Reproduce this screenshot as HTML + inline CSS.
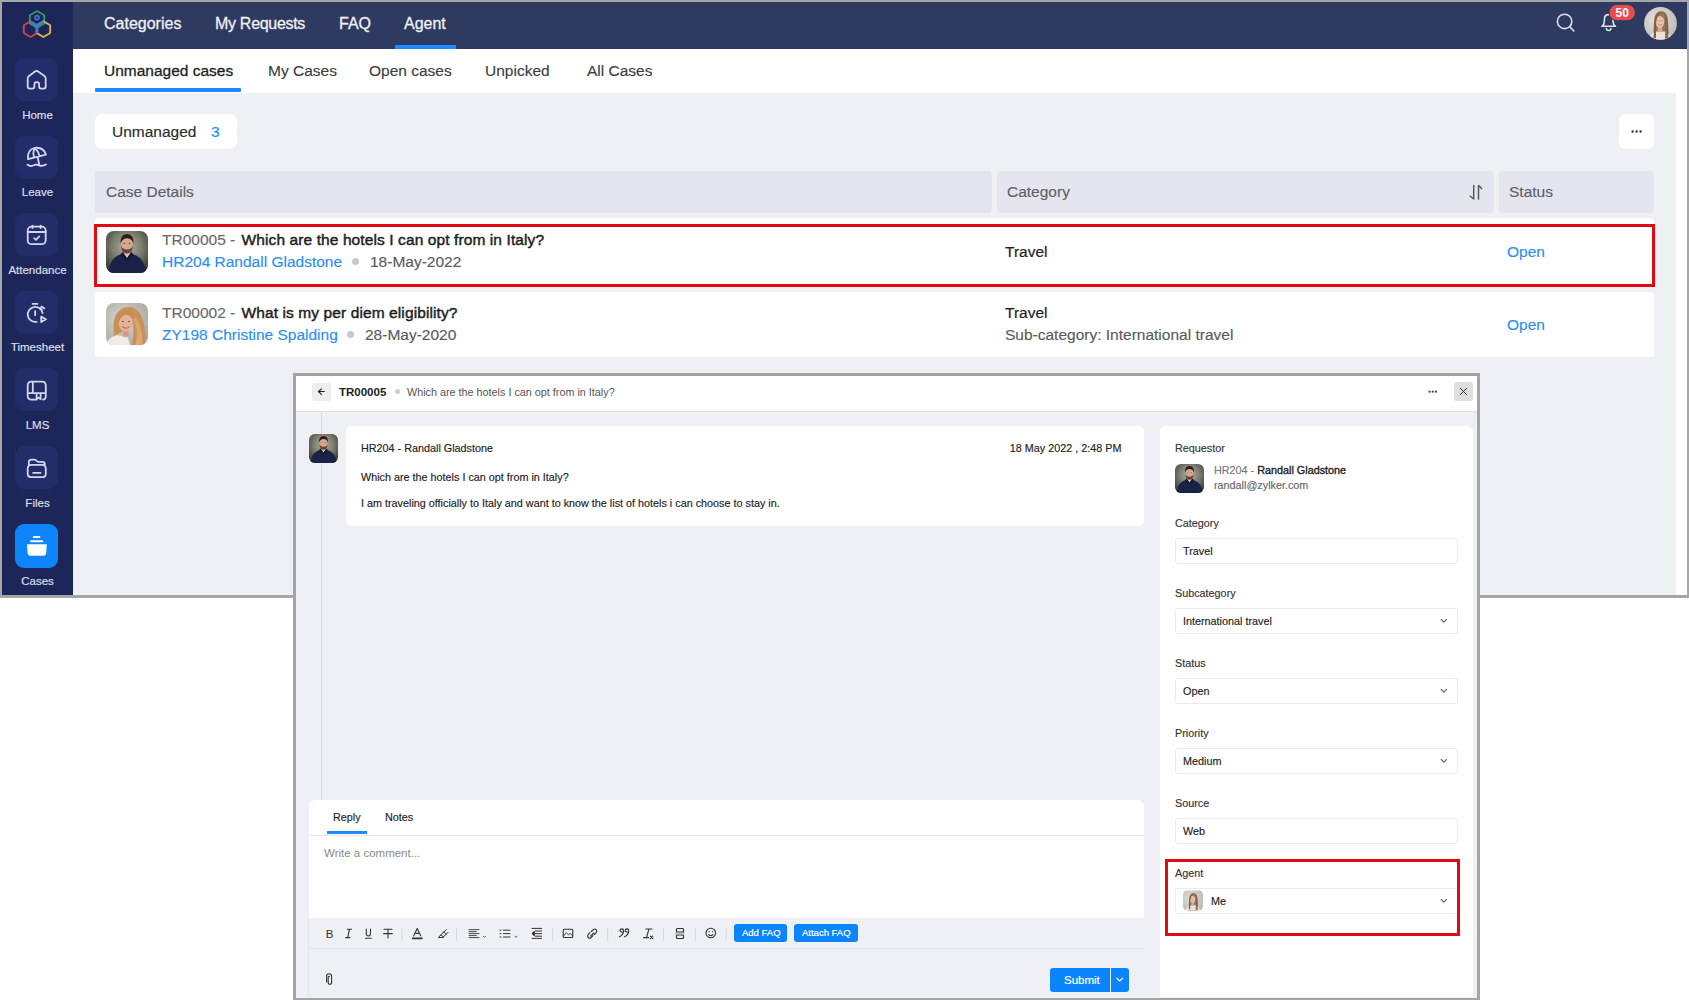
<!DOCTYPE html>
<html><head><meta charset="utf-8">
<style>
*{box-sizing:border-box;margin:0;padding:0}
html,body{width:1689px;height:1000px;overflow:hidden;background:#fff;font-family:"Liberation Sans",sans-serif}
.a{position:absolute}
.t{position:absolute;white-space:nowrap;line-height:1}
svg.ov{position:absolute;left:0;top:0;width:1689px;height:1000px;overflow:visible}
.sb{position:absolute;left:15px;width:43px;height:43px;border-radius:9px;background:#232d69}
.sl{position:absolute;left:2px;width:71px;text-align:center;color:#dcdfea;font-size:11.5px;line-height:1;-webkit-text-stroke:0.2px #dcdfea}
.nav{color:#eef0f6;font-size:16px;-webkit-text-stroke:0.3px #eef0f6}
.sub{color:#2a2a2a;font-size:15.5px;-webkit-text-stroke:0.15px currentColor}
.hd{font-size:15.5px;color:#5f6066;-webkit-text-stroke:0.15px #5f6066}
.fl{font-size:10.8px;color:#333;-webkit-text-stroke:0.15px currentColor}
.fb{position:absolute;left:1175px;width:283px;height:26px;border:1px solid #eaebee;border-radius:3px;background:#fff}
.fv{font-size:10.8px;color:#222;-webkit-text-stroke:0.15px currentColor}

</style></head><body>
<svg width="0" height="0" style="position:absolute">
<defs>
<radialGradient id="gMbg" cx="50%" cy="38%" r="70%"><stop offset="0" stop-color="#b0b1a0"/><stop offset="0.5" stop-color="#7c7d70"/><stop offset="1" stop-color="#333431"/></radialGradient>
<radialGradient id="gWbg" cx="40%" cy="40%" r="70%"><stop offset="0" stop-color="#e4e4e2"/><stop offset="1" stop-color="#b9b7b4"/></radialGradient>
<radialGradient id="gW2bg" cx="40%" cy="40%" r="70%"><stop offset="0" stop-color="#dcdad6"/><stop offset="1" stop-color="#a9a6a2"/></radialGradient>
<symbol id="man" viewBox="0 0 100 100">
<rect width="100" height="100" fill="url(#gMbg)"/>
<path d="M6 100 Q8 64 34 56 L50 60 L66 56 Q92 64 96 100 Z" fill="#1a2347"/>
<path d="M42 50 L50 70 L58 50 Z" fill="#d8c8c0"/>
<path d="M34 56 L50 72 L66 56 L60 50 L50 64 L40 50 Z" fill="#121a33"/>
<ellipse cx="50" cy="31" rx="14" ry="18" fill="#d6a690"/>
<path d="M36 36 Q37 54 50 54 Q63 54 64 36 Q60 44 50 44 Q40 44 36 36 Z" fill="#6a4536"/>
<path d="M35 30 Q33 8 50 7 Q67 8 65 30 Q63 18 50 17 Q38 18 35 30 Z" fill="#2b1e18"/>
<ellipse cx="44" cy="30" rx="2" ry="1.2" fill="#5a3a30"/>
<ellipse cx="56" cy="30" rx="2" ry="1.2" fill="#5a3a30"/>
</symbol>
<symbol id="wme" viewBox="0 0 100 100">
<rect width="100" height="100" fill="url(#gWbg)"/>
<path d="M28 100 L30 46 Q31 12 52 12 Q73 13 73 46 L76 100 Z" fill="#9a7658"/>
<path d="M12 100 Q18 80 36 74 L62 74 Q80 80 86 100 Z" fill="#ebe3d6"/>
<rect x="42" y="58" width="13" height="18" fill="#d9a88e"/>
<ellipse cx="48" cy="45" rx="13.5" ry="17.5" fill="#e9c3aa"/>
<path d="M32 46 Q32 18 52 16 Q40 24 37 44 L36 94 L29 94 Z" fill="#7e5d43"/>
<path d="M66 44 Q66 22 54 16 Q70 18 72 44 L74 96 L64 96 Q66 70 62 50 Z" fill="#866446"/>
<path d="M38 42 L58 42" stroke="#7a6050" stroke-width="1.2" opacity="0.8"/>
<path d="M42 53 Q48 57 54 53" stroke="#a05e4e" stroke-width="1.6" fill="none"/>
</symbol>
<symbol id="wch" viewBox="0 0 100 100">
<rect width="100" height="100" fill="url(#gW2bg)"/>
<path d="M20 80 Q10 30 40 12 Q70 2 84 30 Q96 56 94 100 L62 100 Q68 72 64 52 Z" fill="#c9915a"/>
<path d="M0 100 Q4 82 26 76 L52 82 L58 100 Z" fill="#eeeae6"/>
<rect x="40" y="62" width="14" height="18" fill="#d49c84"/>
<ellipse cx="47" cy="47" rx="17" ry="21" fill="#e6b39a"/>
<path d="M28 46 Q30 16 56 18 Q70 24 68 46 Q62 28 46 28 Q34 32 30 48 Z" fill="#c68b55"/>
<path d="M64 38 Q80 60 70 100 L86 100 Q90 62 72 36 Z" fill="#dca769"/>
<ellipse cx="40" cy="44" rx="2.5" ry="1.5" fill="#7a5444"/>
<ellipse cx="55" cy="44" rx="2.5" ry="1.5" fill="#7a5444"/>
<path d="M38 56 Q47 64 56 56" stroke="#a05a4a" stroke-width="2.2" fill="none"/>
</symbol>
</defs>
</svg>

<!-- frame -->
<div class="a" style="left:0;top:0;width:1689px;height:598px;background:#a5a6a8"></div>
<div class="a" style="left:2px;top:2px;width:71px;height:593px;background:#1c2659"></div>
<div class="a" style="left:73px;top:2px;width:1614px;height:47px;background:#2e3a5f"></div>
<div class="a" style="left:73px;top:49px;width:1614px;height:44px;background:#fff"></div>
<div class="a" style="left:1676px;top:93px;width:11px;height:502px;background:#fff"></div>
<div class="a" style="left:73px;top:93px;width:1603px;height:502px;background:#eef0f4"></div>

<!-- sidebar boxes -->
<div class="sb" style="top:58px"></div>
<div class="sl" style="top:110px">Home</div>
<div class="sb" style="top:135.5px"></div>
<div class="sl" style="top:187px">Leave</div>
<div class="sb" style="top:213px"></div>
<div class="sl" style="top:265px">Attendance</div>
<div class="sb" style="top:290.5px"></div>
<div class="sl" style="top:342px">Timesheet</div>
<div class="sb" style="top:368px"></div>
<div class="sl" style="top:420px">LMS</div>
<div class="sb" style="top:445.5px"></div>
<div class="sl" style="top:498px">Files</div>
<div class="sb" style="top:524px;background:#0f85fb;height:44px"></div>
<div class="sl" style="top:576px">Cases</div>

<svg class="ov" viewBox="0 0 1689 1000">
<!-- logo -->
<g fill="none" stroke-width="1.8" stroke-linejoin="round">
<path d="M37 11 L44.2 15.2 L44.2 23.4 L37 27.6 L29.8 23.4 L29.8 15.2 Z" stroke="#2f9a62"/>
<path d="M30.6 21.2 L37.4 25.2 L37.4 33 L30.6 37 L23.8 33 L23.8 25.2 Z" stroke="#d8424f"/>
<path d="M43.4 21.2 L50.2 25.2 L50.2 33 L43.4 37 L36.6 33 L36.6 25.2 Z" stroke="#e8b44c"/>
<circle cx="37" cy="17.6" r="2" stroke="#3d7cd6" stroke-width="1.6"/>
<path d="M31 22.2 L37 25.6 L43 22.2 M37 25.6 L37 32.6" stroke="#3d7cd6" stroke-width="2.4" stroke-linecap="round"/>
</g>
<!-- sidebar icons -->
<g fill="none" stroke="#d3d6ee" stroke-width="1.8" stroke-linecap="round" stroke-linejoin="round">
<g transform="translate(22,64)"><path d="M5.7 14.5 Q5.7 13 7 12 L13 7.6 Q14.6 6.4 16.2 7.6 L22.4 12 Q23.7 13 23.7 14.5 L23.7 22.6 Q23.7 24.6 21.7 24.6 L19.1 24.6 Q17.1 24.6 17.1 22.6 L17.1 20.4 A2.35 2.35 0 0 0 12.4 20.4 L12.4 22.6 Q12.4 24.6 10.4 24.6 L7.7 24.6 Q5.7 24.6 5.7 22.6 Z"/></g>
<g transform="translate(22,141)"><path d="M6 18.2 Q5 9 12.4 7 Q21 5.5 24 13.6 Z M12.4 7 Q10.5 12 12 16.9 M12.4 7 Q16.5 10 17.5 15.2 M15.8 16.3 L17.2 24"/><path d="M5.5 23.6 Q8 25.8 11 24.5 Q14 23 17 24.3 Q20.5 25.6 24 23.5"/></g>
<g transform="translate(22,220)"><rect x="5.7" y="6.7" width="18" height="17.5" rx="4"/><path d="M5.7 12 L23.7 12 M10.5 5.6 L10.5 8 M18.6 5.6 L18.6 8 M12.2 18.2 L14 19.8 L17.3 16.4"/></g>
<g transform="translate(22,297)"><path d="M10.6 6.9 L15.4 6.9 M20.6 16.1 A7.5 7.5 0 1 0 14.6 24.8 M13.2 14.1 L13.2 18.2 M19.6 9.4 L22.4 11.4 M18.2 10.8 L19.8 12.6"/><path d="M19.2 19.6 L24 22.3 L19.2 25 Z"/></g>
<g transform="translate(22,375)"><path d="M14.6 24.6 L9.5 24.6 Q5.7 24.6 5.7 20.8 L5.7 10.4 Q5.7 6.6 9.5 6.6 L20 6.6 Q23.8 6.6 23.8 10.4 L23.8 20.8 Q23.8 24.6 21 24.6 M10.8 6.6 L10.8 18.1 M5.7 18.1 L23.8 18.1 M14.6 18.2 L14.6 24.2 L16.6 22.6 L18.6 24.2 L18.6 18.2"/></g>
<g transform="translate(22,452)"><path d="M6.8 12.6 L6.8 10.4 Q6.8 7.6 9.6 7.6 L12.2 7.6 Q13.6 7.6 14.8 9 Q15.6 9.9 17 9.9 L20.4 9.9 Q22.8 9.9 22.8 12.4 M5.7 16.6 Q5.7 12.8 9.5 12.8 L20 12.8 Q23.8 12.8 23.8 16.6 L23.8 21.4 Q23.8 25.2 20 25.2 L9.5 25.2 Q5.7 25.2 5.7 21.4 Z M11.2 20.9 L18.5 20.9"/></g>
</g>
<!-- cases icon -->
<g fill="#fff">
<rect x="32.8" y="536" width="7.6" height="2" rx="1"/>
<rect x="30" y="540.3" width="13.2" height="2" rx="1"/>
<path d="M27 544.2 L46.8 544.2 L46.2 553 Q46 555.8 43.2 555.8 L30.6 555.8 Q27.8 555.8 27.6 553 Z"/>
</g>
<!-- search, bell -->
<g fill="none" stroke="#dfe2ee" stroke-width="1.6" stroke-linecap="round">
<circle cx="1564.6" cy="21.4" r="7.2"/>
<path d="M1569.8 26.8 L1573.8 31"/>
<path d="M1601.9 26.3 Q1604.3 24.6 1604.4 21.2 L1604.4 19 Q1604.4 14.6 1608.7 14.6 Q1613 14.6 1613 19 L1613 21.2 Q1613.1 24.6 1615.5 26.3 Z" stroke-linejoin="round"/>
<path d="M1606.3 28.6 A2.4 2.4 0 0 0 1611 28.6"/>
</g>
<rect x="1609" y="4.4" width="26.4" height="16.4" rx="8.2" fill="#e84c4f" stroke="#2e3a5f" stroke-width="1"/>
<text x="1622.2" y="17.4" font-family="Liberation Sans" font-size="12" font-weight="bold" fill="#fff" text-anchor="middle">50</text>
<!-- avatar top -->
<clipPath id="cTop"><circle cx="1660.5" cy="23.4" r="16.4"/></clipPath>
<g clip-path="url(#cTop)"><use href="#wme" x="1644" y="7" width="33" height="33"/></g>
</svg>

<!-- top nav -->
<div class="t nav" style="left:104px;top:16px">Categories</div>
<div class="t nav" style="left:215px;top:16px;letter-spacing:-0.3px">My Requests</div>
<div class="t nav" style="left:339px;top:16px">FAQ</div>
<div class="t nav" style="left:404px;top:16px">Agent</div>
<div class="a" style="left:395px;top:45px;width:61px;height:4px;background:#1a8cff"></div>

<!-- sub tabs -->
<div class="t sub" style="left:104px;top:62.5px;color:#1f1f1f;-webkit-text-stroke:0.3px #1f1f1f">Unmanaged cases</div>
<div class="t sub" style="left:268px;top:62.5px;color:#3d3d3d">My Cases</div>
<div class="t sub" style="left:369px;top:62.5px;color:#3d3d3d">Open cases</div>
<div class="t sub" style="left:485px;top:62.5px;color:#3d3d3d">Unpicked</div>
<div class="t sub" style="left:587px;top:62.5px;color:#3d3d3d">All Cases</div>
<div class="a" style="left:95px;top:88px;width:146px;height:4px;background:#1a8cff;border-radius:1px"></div>

<!-- unmanaged card -->
<div class="a" style="left:95px;top:114px;width:142px;height:35px;background:#fff;border-radius:8px"></div>
<div class="t sub" style="left:112px;top:124px">Unmanaged</div>
<div class="t sub" style="left:211px;top:124px;color:#1a8cff">3</div>
<div class="a" style="left:1619px;top:114px;width:35px;height:35px;background:#fff;border-radius:6px"></div>
<svg class="ov" viewBox="0 0 1689 1000"><g fill="#333"><circle cx="1632.6" cy="131.5" r="1.2"/><circle cx="1636.6" cy="131.5" r="1.2"/><circle cx="1640.6" cy="131.5" r="1.2"/></g></svg>

<!-- table header -->
<div class="a" style="left:95px;top:170.5px;width:897px;height:42px;background:#e4e5ee;border-radius:4px"></div>
<div class="a" style="left:997px;top:170.5px;width:497px;height:42px;background:#e4e5ee;border-radius:4px"></div>
<div class="a" style="left:1499px;top:170.5px;width:155px;height:42px;background:#e4e5ee;border-radius:4px"></div>
<div class="t hd" style="left:106px;top:184px">Case Details</div>
<div class="t hd" style="left:1007px;top:184px">Category</div>
<div class="t hd" style="left:1509px;top:184px">Status</div>

<!-- rows -->
<div class="a" style="left:95px;top:218px;width:1559px;height:68px;background:#fff;border-radius:4px"></div>
<div class="a" style="left:95px;top:292px;width:1559px;height:65px;background:#fff;border-radius:4px"></div>
<svg class="ov" viewBox="0 0 1689 1000">
<!-- sort -->
<g fill="none" stroke="#555" stroke-width="1.45" stroke-linecap="round" stroke-linejoin="round">
<path d="M1473.7 185.4 L1473.7 199 L1470.3 196.3"/>
<path d="M1478.5 199 L1478.5 185.4 L1481.6 188.6"/>
</g>
<clipPath id="cR1"><rect x="106" y="231" width="42" height="42" rx="8"/></clipPath>
<g clip-path="url(#cR1)"><use href="#man" x="106" y="231" width="42" height="42"/></g>
<clipPath id="cR2"><rect x="106" y="303" width="42" height="42" rx="8"/></clipPath>
<g clip-path="url(#cR2)"><use href="#wch" x="106" y="303" width="42" height="42"/></g>
</svg>
<div class="a" style="left:94px;top:223.5px;width:1560.5px;height:63px;border:3px solid #e10a14"></div>

<div class="t sub" style="left:162px;top:231.5px;color:#6a6a6a">TR00005 - <span style="color:#1e1e1e;-webkit-text-stroke:0.45px #1e1e1e;letter-spacing:0.1px;margin-left:2px">Which are the hotels I can opt from in Italy?</span></div>
<div class="t sub" style="left:162px;top:254px;color:#2b8ef0">HR204 Randall Gladstone</div>
<div class="a" style="left:352px;top:258px;width:7px;height:7px;border-radius:50%;background:#c8c8c8"></div>
<div class="t sub" style="left:370px;top:254px;color:#5a5a5a">18-May-2022</div>
<div class="t sub" style="left:1005px;top:244px;color:#1e1e1e;-webkit-text-stroke:0.2px #1e1e1e">Travel</div>
<div class="t sub" style="left:1507px;top:244px;color:#2b8ef0">Open</div>

<div class="t sub" style="left:162px;top:305px;color:#6a6a6a">TR00002 - <span style="color:#1e1e1e;-webkit-text-stroke:0.45px #1e1e1e;letter-spacing:0.1px;margin-left:2px">What is my per diem eligibility?</span></div>
<div class="t sub" style="left:162px;top:327px;color:#2b8ef0">ZY198 Christine Spalding</div>
<div class="a" style="left:347px;top:331px;width:7px;height:7px;border-radius:50%;background:#c8c8c8"></div>
<div class="t sub" style="left:365px;top:327px;color:#5a5a5a">28-May-2020</div>
<div class="t sub" style="left:1005px;top:305px;color:#1e1e1e;-webkit-text-stroke:0.2px #1e1e1e">Travel</div>
<div class="t sub" style="left:1005px;top:327px;color:#5a5a5a">Sub-category: International travel</div>
<div class="t sub" style="left:1507px;top:317px;color:#2b8ef0">Open</div>

<!-- MODAL -->
<div class="a" style="left:293px;top:373px;width:1186.5px;height:627px;background:#a3a4a6"></div>
<div class="a" style="left:296px;top:376px;width:1180.5px;height:621.5px;background:#eef0f4"></div>
<div class="a" style="left:296px;top:376px;width:1180.5px;height:36px;background:#fff;border-bottom:1px solid #dfe1e6"></div>
<div class="a" style="left:312px;top:383px;width:19px;height:18px;background:#eeeeee;border-radius:3px"></div>
<div class="t" style="left:339px;top:386.5px;font-size:11.5px;color:#222;font-weight:bold">TR00005</div>
<div class="a" style="left:395px;top:389px;width:5px;height:5px;border-radius:50%;background:#cfcfcf"></div>
<div class="t" style="left:407px;top:386.5px;font-size:10.8px;color:#555">Which are the hotels I can opt from in Italy?</div>
<div class="a" style="left:1454px;top:382px;width:19px;height:19px;background:#dedede;border-radius:3px"></div>

<!-- timeline -->
<div class="a" style="left:321px;top:412px;width:1px;height:388px;background:#d9dce2"></div>

<!-- message card -->
<div class="a" style="left:346px;top:426px;width:798px;height:100px;background:#fff;border-radius:6px"></div>
<div class="t fv" style="left:361px;top:443px">HR204 - Randall Gladstone</div>
<div class="t fv" style="right:567.5px;top:443px">18 May 2022 , 2:48 PM</div>
<div class="t fv" style="left:361px;top:472px">Which are the hotels I can opt from in Italy?</div>
<div class="t fv" style="left:361px;top:498px">I am traveling officially to Italy and want to know the list of hotels i can choose to stay in.</div>

<!-- reply panel -->
<div class="a" style="left:309px;top:800px;width:835px;height:148px;background:#fff;border-radius:6px 6px 0 0"></div>
<div class="a" style="left:309px;top:835px;width:835px;height:1px;background:#e3e5ea"></div>
<div class="t fv" style="left:333px;top:812px">Reply</div>
<div class="t fv" style="left:385px;top:812px">Notes</div>
<div class="a" style="left:327px;top:831px;width:40px;height:3px;background:#1a8cff"></div>
<div class="t" style="left:324px;top:848px;font-size:11.5px;color:#8a8a8a">Write a comment...</div>
<div class="a" style="left:309px;top:918px;width:835px;height:31px;background:#eff0f4;border-bottom:1px solid #dfe1e6"></div>
<div class="a" style="left:308px;top:918px;width:1px;height:79px;background:#e2e4e8"></div>
<svg class="ov" viewBox="0 0 1689 1000">
<g fill="#2f2f2f" font-family="Liberation Serif" font-size="11.5">
<text x="325.8" y="938" font-family="Liberation Sans">B</text>
</g>
<g fill="none" stroke="#333" stroke-width="1.1" stroke-linecap="round" stroke-linejoin="round">
<!-- U -->
<path d="M366.3 929 L366.3 933.5 Q366.3 936 368.4 936 Q370.5 936 370.5 933.5 L370.5 929 M365.5 938.3 L371.3 938.3"/>
<!-- T strike -->
<path d="M384 929.3 L392 929.3 M388 929.3 L388 938 M383.6 933.6 L392.4 933.6"/>
<!-- A -->
<path d="M413.6 936 L417.2 928.6 L420.8 936 M414.8 933.4 L419.6 933.4"/>
<path d="M412.6 938.4 L421.9 938.4" stroke-width="1.6"/>
<!-- highlighter -->
<path d="M347.3 929.2 L351.6 929.2 M345.6 937.6 L349.9 937.6 M349.5 929.2 L347.7 937.6"/>
<path d="M438.6 937.4 L440.8 934.8 L443.4 937 Z M440.8 934.8 L446.4 929.6 M443.4 937 L448 932.4 M443.6 931.8 L446 934.2" stroke-width="1"/>
<!-- align -->
<path d="M469 929.6 L479 929.6 M469 931.6 L476.4 931.6 M469 933.6 L479 933.6 M469 935.6 L476.4 935.6 M469 937.6 L479 937.6" stroke-width="0.9"/>
<path d="M483.5 936.5 L484.5 937.3 L485.5 936.5" stroke-width="0.8"/>
<!-- list -->
<path d="M503.4 930.2 L510 930.2 M503.4 933.6 L510 933.6 M503.4 937 L510 937" stroke-width="1"/>
<path d="M500 930.2 L501 930.2 M500 933.6 L501 933.6 M500 937 L501 937" stroke-width="1"/>
<path d="M515 936.5 L516 937.3 L517 936.5" stroke-width="0.8"/>
<!-- outdent -->
<path d="M532 928.4 L541.6 928.4 M535.4 931 L541.6 931 M535.4 933.6 L541.6 933.6 M535.4 936.2 L541.6 936.2 M532 938.4 L541.6 938.4" stroke-width="1"/>
<path d="M534.3 931.6 L532.2 933.6 L534.3 935.6 Z" fill="#333"/>
<!-- image -->
<rect x="563.2" y="929.3" width="9.6" height="8.2" rx="1"/>
<path d="M563.6 936 L566.3 932.6 L568.5 934.8 L570 933.4 L572.6 935.8" stroke-width="0.9"/>
<!-- link -->
<path d="M591.4 931.5 L593.2 929.7 Q594.8 928.3 596.2 929.7 Q597.6 931.1 596.2 932.7 L594.4 934.5 M593 935.7 L591.2 937.5 Q589.6 938.9 588.2 937.5 Q586.8 936.1 588.2 934.5 L590 932.7 M590.6 936.2 L593.8 933"/>
<!-- quote -->
<path d="M622.8 932.2 Q620 932.2 620 930.6 Q620 928.9 621.9 928.9 Q623.6 928.9 623.6 931 Q623.6 934.4 619.4 936.8 M628 932.2 Q625.2 932.2 625.2 930.6 Q625.2 928.9 627.1 928.9 Q628.8 928.9 628.8 931 Q628.8 934.4 624.6 936.8" stroke-width="1.1"/>
<!-- clear format -->
<path d="M645.8 929 L652 929 M648.9 929 L646.6 937.6 M643.6 937.6 L648.6 937.6"/>
<path d="M650.4 936.2 L652.8 938.6 M652.8 936.2 L650.4 938.6" stroke-width="1.2"/>
<!-- insert break -->
<path d="M676.5 932 L676.5 929.4 Q676.5 928.5 677.4 928.5 L682.6 928.5 Q683.5 928.5 683.5 929.4 L683.5 932 Z M676.5 935 L676.5 937.6 Q676.5 938.5 677.4 938.5 L682.6 938.5 Q683.5 938.5 683.5 937.6 L683.5 935 Z" stroke-width="1.2"/>
<path d="M675 933.5 L685 933.5" stroke-width="0.5" stroke-dasharray="0.8 1.2" stroke="#888"/>
<!-- emoji -->
<circle cx="710.8" cy="933" r="4.8"/>
<path d="M708.6 934.6 Q710.8 936.8 713 934.6"/>
</g>
<g fill="#333"><circle cx="709.1" cy="931.6" r="0.7"/><circle cx="712.5" cy="931.6" r="0.7"/></g>
<g stroke="#d6d8dd" stroke-width="1">
<path d="M402 928 L402 941 M456.5 928 L456.5 941 M552.7 928 L552.7 941 M607.7 928 L607.7 941 M663.5 928 L663.5 941 M695.4 928 L695.4 941 M726.2 928 L726.2 941"/>
</g>
<!-- attach -->
<g fill="none" stroke="#333" stroke-width="1.1" stroke-linecap="round">
<path d="M326.6 982 L326.6 976.5 Q326.6 973.8 329.1 973.8 Q331.6 973.8 331.6 976.5 L331.6 982.2 Q331.6 984.3 329.9 984.3 Q328.2 984.3 328.2 982.2 L328.2 977.4 Q328.2 976.2 329.4 976.4"/>
</g>
</svg>
<div class="a" style="left:734px;top:924px;width:53px;height:18px;background:#0a84ff;border-radius:3px"></div>
<div class="t" style="left:742px;top:928px;font-size:9.5px;color:#fff;-webkit-text-stroke:0.2px #fff">Add FAQ</div>
<div class="a" style="left:794px;top:924px;width:64px;height:18px;background:#0a84ff;border-radius:3px"></div>
<div class="t" style="left:802px;top:928px;font-size:9.5px;color:#fff;-webkit-text-stroke:0.2px #fff">Attach FAQ</div>
<div class="a" style="left:1050px;top:968px;width:60px;height:24px;background:#0a84ff;border-radius:3px 0 0 3px"></div>
<div class="t" style="left:1064px;top:975px;font-size:11.5px;color:#fff;-webkit-text-stroke:0.2px #fff">Submit</div>
<div class="a" style="left:1111px;top:968px;width:18px;height:24px;background:#0a84ff;border-radius:0 3px 3px 0"></div>

<!-- right panel -->
<div class="a" style="left:1160px;top:426px;width:313px;height:571px;background:#fff;border-radius:6px 6px 0 0"></div>
<div class="t fl" style="left:1175px;top:443px">Requestor</div>
<div class="t fv" style="left:1214px;top:465px;color:#777">HR204 - <span style="color:#222;-webkit-text-stroke:0.35px #222">Randall Gladstone</span></div>
<div class="t fv" style="left:1214px;top:480px;color:#666">randall@zylker.com</div>
<div class="t fl" style="left:1175px;top:518px">Category</div>
<div class="fb" style="top:538px"></div>
<div class="t fv" style="left:1183px;top:546px">Travel</div>
<div class="t fl" style="left:1175px;top:588px">Subcategory</div>
<div class="fb" style="top:608px"></div>
<div class="t fv" style="left:1183px;top:616px">International travel</div>
<div class="t fl" style="left:1175px;top:658px">Status</div>
<div class="fb" style="top:678px"></div>
<div class="t fv" style="left:1183px;top:686px">Open</div>
<div class="t fl" style="left:1175px;top:728px">Priority</div>
<div class="fb" style="top:748px"></div>
<div class="t fv" style="left:1183px;top:756px">Medium</div>
<div class="t fl" style="left:1175px;top:798px">Source</div>
<div class="fb" style="top:818px"></div>
<div class="t fv" style="left:1183px;top:826px">Web</div>

<div class="t fl" style="left:1175px;top:868px">Agent</div>
<div class="fb" style="top:888px"></div>
<div class="t fv" style="left:1211px;top:896px">Me</div>
<svg class="ov" viewBox="0 0 1689 1000">
<g fill="none" stroke="#666" stroke-width="1.15" stroke-linecap="round" stroke-linejoin="round">
<path d="M1441.2 619.5 L1443.8 622.1 L1446.5 619.5"/>
<path d="M1441.2 689.5 L1443.8 692.1 L1446.5 689.5"/>
<path d="M1441.2 759.5 L1443.8 762.1 L1446.5 759.5"/>
<path d="M1441.2 899.5 L1443.8 902.1 L1446.5 899.5"/>
<path d="M1116.8 978.2 L1119.6 981 L1122.6 978.2" stroke="#fff"/>
<path d="M324.3 391.5 L318.4 391.5 M321.4 388.8 L318.4 391.5 L321.4 394.3" stroke="#222" stroke-width="1.1"/>
<path d="M1460.2 388.2 L1466.7 394.7 M1466.7 388.2 L1460.2 394.7" stroke="#333" stroke-width="1"/>
</g>
<g fill="#444"><circle cx="1429.5" cy="391.7" r="1.1"/><circle cx="1432.7" cy="391.7" r="1.1"/><circle cx="1435.9" cy="391.7" r="1.1"/></g>
<clipPath id="cT1"><rect x="309" y="434" width="29" height="29" rx="6"/></clipPath><g clip-path="url(#cT1)"><use href="#man" x="309" y="434" width="29" height="29"/></g>
<clipPath id="cT2"><rect x="1175" y="464" width="29" height="29" rx="6"/></clipPath><g clip-path="url(#cT2)"><use href="#man" x="1175" y="464" width="29" height="29"/></g>
<clipPath id="cT3"><rect x="1183" y="890" width="20" height="21" rx="5"/></clipPath><g clip-path="url(#cT3)"><use href="#wme" x="1183" y="890" width="20" height="21" preserveAspectRatio="none"/></g>
</svg>
<div class="a" style="left:1165px;top:859px;width:295px;height:77px;border:3px solid #e10a14"></div>

</body></html>
